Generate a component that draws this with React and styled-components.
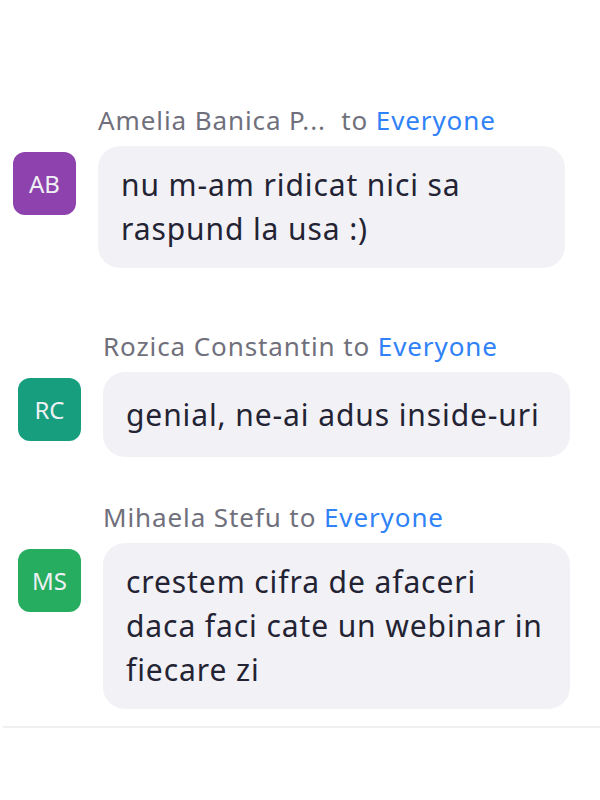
import React from 'react';
import styled, { createGlobalStyle } from 'styled-components';

const GlobalStyle = createGlobalStyle`
  body {
    margin: 0;
    background: #ffffff;
    font-family: "Noto Sans", "Open Sans", sans-serif;
  }
`;

const ChatPanel = styled.div`
  width: 600px;
  height: 800px;
  box-sizing: border-box;
  padding-top: 104px;
  display: flex;
  flex-direction: column;
`;

const Message = styled.div`
  display: grid;
  grid-template-columns: 63px 467px;
  column-gap: 22px;
  margin-top: ${(p) => p.$top || 0}px;
  padding-left: ${(p) => p.$left}px;
`;

const Header = styled.div`
  grid-column: 2;
  font-size: 26px;
  letter-spacing: 0.9px;
  line-height: 32px;
  color: #70707c;
  white-space: pre;
  margin-bottom: 10px;
`;

const Recipient = styled.span`
  color: #2f82f7;
`;

const Avatar = styled.div`
  grid-column: 1;
  width: 63px;
  height: 63px;
  margin-top: 6px;
  border-radius: 12px;
  background: ${(p) => p.$color};
  color: #eef0f4;
  font-size: 24px;
  display: flex;
  align-items: center;
  justify-content: center;
`;

const Bubble = styled.div`
  grid-column: 2;
  box-sizing: border-box;
  min-height: 85px;
  display: flex;
  align-items: center;
  background: #f1f1f6;
  border-radius: 22px;
  padding: 17px 23px;
  font-size: 30px;
  letter-spacing: 0.9px;
  line-height: 44px;
  color: #232333;
  white-space: pre-line;
`;

const Divider = styled.div`
  margin-top: 17px;
  margin-left: 3px;
  height: 2px;
  background: #f0f0f2;
`;

const messages = [
  {
    name: 'Amelia Banica P...  ',
    initials: 'AB',
    color: '#8e42ad',
    text: 'nu m-am ridicat nici sa\nraspund la usa :)',
    left: 13,
    top: 0,
  },
  {
    name: 'Rozica Constantin ',
    initials: 'RC',
    color: '#179e7f',
    text: 'genial, ne-ai adus inside-uri',
    left: 18,
    top: 62,
  },
  {
    name: 'Mihaela Stefu ',
    initials: 'MS',
    color: '#27ad5f',
    text: 'crestem cifra de afaceri\ndaca faci cate un webinar in\nfiecare zi',
    left: 18,
    top: 44,
  },
];

export default function App() {
  return (
    <>
      <GlobalStyle />
      <ChatPanel>
        {messages.map((m) => (
          <Message key={m.initials} $left={m.left} $top={m.top}>
            <Header>
              {m.name}to <Recipient>Everyone</Recipient>
            </Header>
            <Avatar $color={m.color}>{m.initials}</Avatar>
            <Bubble>{m.text}</Bubble>
          </Message>
        ))}
        <Divider />
      </ChatPanel>
    </>
  );
}
